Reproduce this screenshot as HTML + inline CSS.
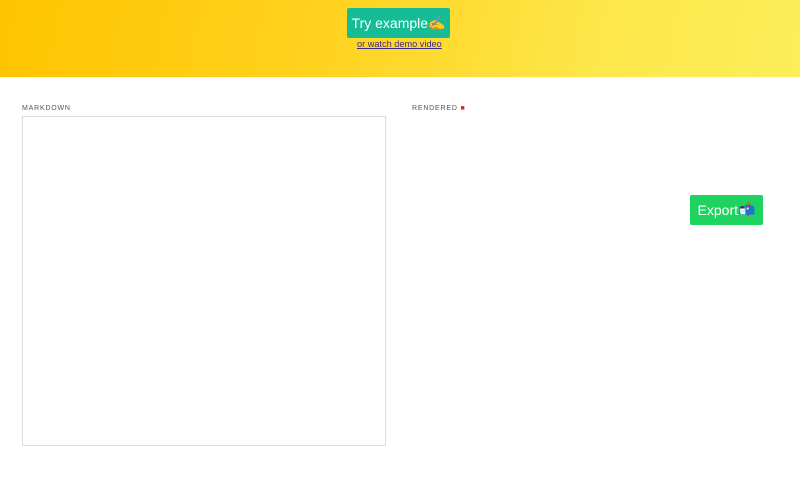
<!DOCTYPE html>
<html><head><meta charset="utf-8"><style>
*{margin:0;padding:0;box-sizing:border-box}
body{width:800px;height:481px;overflow:hidden;background:#fff;font-family:"Liberation Sans",sans-serif;position:relative}
.hdr{position:absolute;left:0;top:0;width:800px;height:77px;background:linear-gradient(100deg,#ffc400 0%,#ffd21e 40%,#fde74a 75%,#fbee5a 100%)}
.try{position:absolute;left:347px;top:8px;width:103px;height:30px;background:#15bc95;color:#fff;font-size:14px;line-height:30px;text-align:center;border-radius:2px;white-space:nowrap;overflow:hidden}
.demo{position:absolute;left:357px;top:39px;font-size:9.2px;color:#3a2a8a;text-decoration:underline;white-space:nowrap}
.lab{position:absolute;top:105px;font-size:7px;letter-spacing:0.8px;color:#555}
.ta{position:absolute;left:22px;top:116px;width:364px;height:330px;border:1px solid #ddd;background:#fff}
.exp{position:absolute;left:690px;top:195px;width:73px;height:30px;background:#1ed35f;color:#fff;font-size:14px;line-height:30px;text-align:center;border-radius:2px;white-space:nowrap}
</style></head><body>
<div class="hdr"></div>
<div class="try">Try example✍</div>
<div class="demo">or watch demo video</div>
<div class="lab" style="left:22px">MARKDOWN</div>
<div class="lab" style="left:412px">RENDERED <span style="color:#d22">■</span></div>
<div class="ta"></div>
<div class="exp">Export📬</div>
</body></html>
